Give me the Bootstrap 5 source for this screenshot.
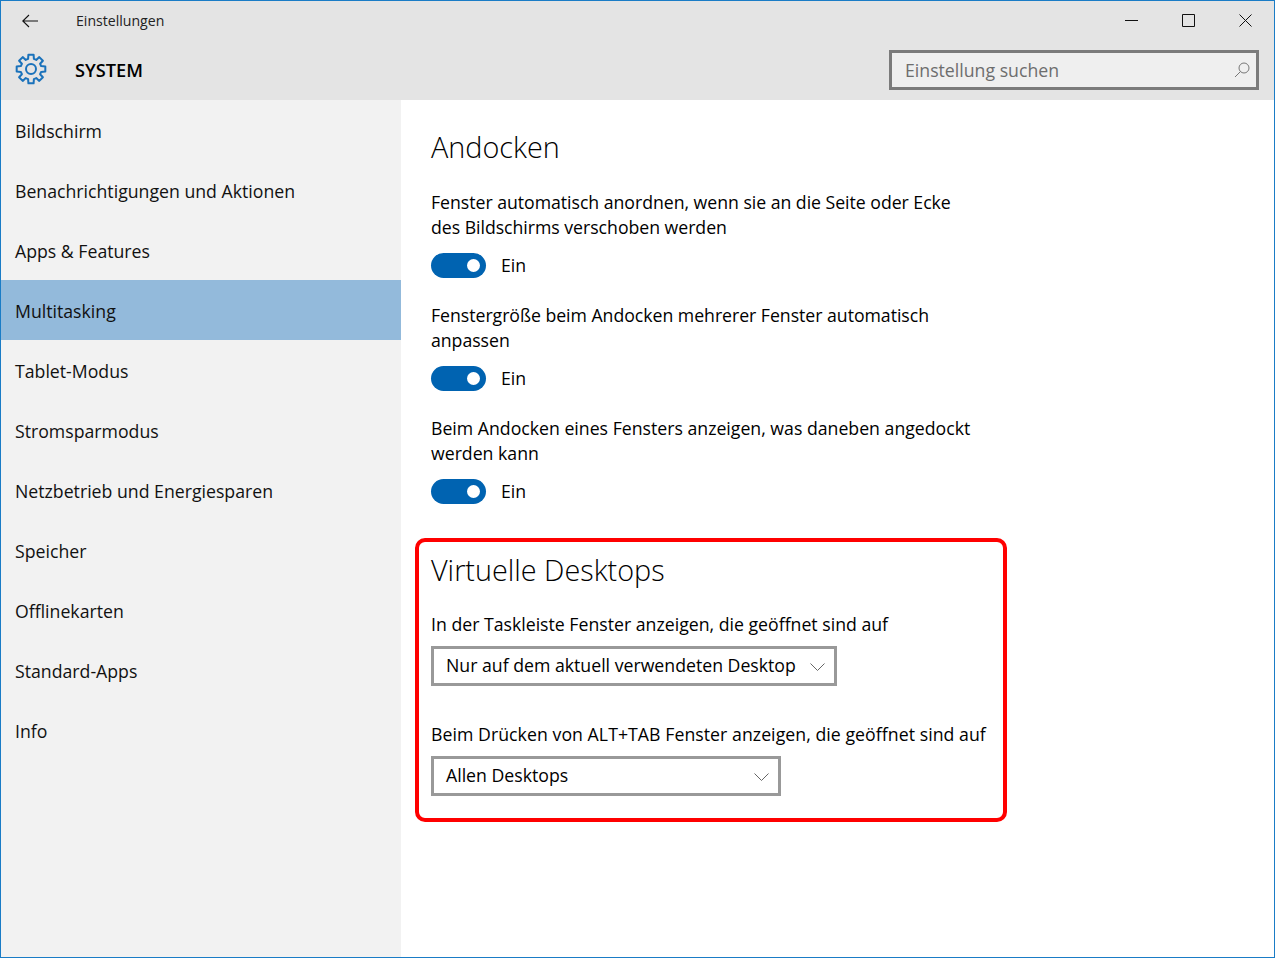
<!DOCTYPE html>
<html lang="de">
<head>
<meta charset="utf-8">
<title>Einstellungen</title>
<link href="https://cdn.jsdelivr.net/npm/bootstrap@5.3.0/dist/css/bootstrap.min.css" rel="stylesheet">
<style>
html,body{height:100%;}
body{margin:0;background:#fff;color:#000;font-family:"Open Sans","Noto Sans",sans-serif;font-size:17.7px;line-height:25px;overflow:hidden;}
.win-frame{height:958px;width:1275px;border:1px solid #1a7cc6;display:flex;flex-direction:column;}
.win-head{height:99px;background:#e4e4e4;flex:none;}
.title-row{height:39px;}
.back-slot{width:59px;padding-left:21px;}
.app-title{font-size:14.1px;margin-left:16px;color:#222;}
.ctl-slot{width:57px;height:39px;}
.sys-row{height:60px;padding-right:15px;}
.gear-slot{width:74px;padding:0 0 2px 14px;}
.sys-title{font-size:18.2px;font-weight:600;color:#000;}
.search-box{width:370px;height:40px;border:3px solid #7b7b7b;background:#efefef;padding:0 6px 0 13px;color:#6d6d6d;}
.side-nav{width:400px;background:#f2f2f2;flex:none;}
.side-item{height:60px;padding:1px 0 0 14px;line-height:60px;color:#111;}
.side-item.on{background:#93badb;}
.pane{padding:0 0 0 14px;}
.sect-title{font-size:28.8px;line-height:36px;font-weight:300;color:#000;margin:0;}
.lead-sect{padding:29px 0 0 16px;}
.setting-text{width:570px;margin:0;}
.mt-first{margin-top:25px;}
.mt-next{margin-top:19px;}
.sw-row{height:38px;margin-top:6px;}
.sw-track{width:55px;height:25px;border-radius:13px;background:#0063b1;position:relative;flex:none;}
.sw-knob{position:absolute;right:6px;top:6px;width:13px;height:13px;border-radius:50%;background:#fff;}
.sw-label{margin-left:15px;}
.red-box{width:592px;height:284px;border:4px solid #f00;border-radius:10px;margin-top:28px;padding:10px 0 0 12px;}
.combo{height:40px;border:3px solid #999;display:flex;align-items:center;justify-content:space-between;padding:0 9px 2px 12px;margin-top:9px;color:#000;}
.combo svg{margin-top:3px;}
.combo-a{width:406px;}
.combo-b{width:350px;}
.label-a{margin-top:24px;}
.label-b{margin-top:36px;letter-spacing:.05px;}
.tight-line{letter-spacing:-.03px;}
</style>
</head>
<body>
<div class="win-frame">
  <header class="win-head">
    <div class="title-row d-flex align-items-center">
      <div class="back-slot d-flex">
        <svg width="16" height="14" viewBox="0 0 16 14" fill="none" stroke="#111" stroke-width="1.1"><path d="M0.8 7H16M7 1 0.8 7l6.2 6"/></svg>
      </div>
      <span class="app-title">Einstellungen</span>
      <div class="ms-auto d-flex">
        <div class="ctl-slot d-flex align-items-center justify-content-center"><svg width="13" height="13" viewBox="0 0 13 13" fill="none" stroke="#111"><path d="M0 6.5H13"/></svg></div>
        <div class="ctl-slot d-flex align-items-center justify-content-center"><svg width="13" height="13" viewBox="0 0 13 13" fill="none" stroke="#111"><path d="M.5.5h12v12H.5z"/></svg></div>
        <div class="ctl-slot d-flex align-items-center justify-content-center"><svg width="13" height="13" viewBox="0 0 13 13" fill="none" stroke="#111"><path d="M.5.5l12 12M12.5.5l-12 12"/></svg></div>
      </div>
    </div>
    <div class="sys-row d-flex align-items-center">
      <div class="gear-slot d-flex">
        <svg width="32" height="32" viewBox="-16 -16 32 32" fill="none" stroke="#1a72bb" stroke-width="2" stroke-linejoin="round"><circle r="5"/><path d="M-2.9-10.14-2.6-14.32 2.6-14.32 2.9-10.14 5.25-9.09 8.3-11.9 11.9-8.3 9.09-5.25 10.14-2.9 14.32-2.6 14.32 2.6 10.14 2.9 9.09 5.25 11.9 8.3 8.3 11.9 5.25 9.09 2.9 10.14 2.6 14.32-2.6 14.32-2.9 10.14-5.25 9.09-8.3 11.9-11.9 8.3-9.09 5.25-10.14 2.9-14.32 2.6-14.32-2.6-10.14-2.9-9.09-5.25-11.9-8.3-8.3-11.9-5.25-9.09Z"/></svg>
      </div>
      <span class="sys-title">SYSTEM</span>
      <div class="search-box ms-auto d-flex align-items-center justify-content-between">
        <span>Einstellung suchen</span>
        <svg width="16" height="16" viewBox="0 0 16 16" fill="none" stroke="#777"><circle cx="10" cy="6" r="5"/><path d="M6.5 9.5 1 15"/></svg>
      </div>
    </div>
  </header>
  <div class="d-flex flex-grow-1">
    <nav class="side-nav">
      <div class="side-item">Bildschirm</div>
      <div class="side-item">Benachrichtigungen und Aktionen</div>
      <div class="side-item">Apps &amp; Features</div>
      <div class="side-item on">Multitasking</div>
      <div class="side-item">Tablet-Modus</div>
      <div class="side-item">Stromsparmodus</div>
      <div class="side-item">Netzbetrieb und Energiesparen</div>
      <div class="side-item">Speicher</div>
      <div class="side-item">Offlinekarten</div>
      <div class="side-item">Standard-Apps</div>
      <div class="side-item">Info</div>
    </nav>
    <main class="pane flex-grow-1">
      <section class="lead-sect">
        <h2 class="sect-title">Andocken</h2>
        <p class="setting-text mt-first tight-line">Fenster automatisch anordnen, wenn sie an die Seite oder Ecke<br>des Bildschirms verschoben werden</p>
        <div class="sw-row d-flex align-items-center"><div class="sw-track"><span class="sw-knob"></span></div><span class="sw-label">Ein</span></div>
        <p class="setting-text mt-next tight-line">Fenstergröße beim Andocken mehrerer Fenster automatisch<br>anpassen</p>
        <div class="sw-row d-flex align-items-center"><div class="sw-track"><span class="sw-knob"></span></div><span class="sw-label">Ein</span></div>
        <p class="setting-text mt-next">Beim Andocken eines Fensters anzeigen, was daneben angedockt<br>werden kann</p>
        <div class="sw-row d-flex align-items-center"><div class="sw-track"><span class="sw-knob"></span></div><span class="sw-label">Ein</span></div>
      </section>
      <section class="red-box">
        <h2 class="sect-title">Virtuelle Desktops</h2>
        <p class="label-a mb-0">In der Taskleiste Fenster anzeigen, die geöffnet sind auf</p>
        <div class="combo combo-a"><span>Nur auf dem aktuell verwendeten Desktop</span><svg width="15" height="8" viewBox="0 0 15 8" fill="none" stroke="#666"><path d="M.5.5l7 7 7-7"/></svg></div>
        <p class="label-b mb-0">Beim Drücken von ALT+TAB Fenster anzeigen, die geöffnet sind auf</p>
        <div class="combo combo-b"><span>Allen Desktops</span><svg width="15" height="8" viewBox="0 0 15 8" fill="none" stroke="#666"><path d="M.5.5l7 7 7-7"/></svg></div>
      </section>
    </main>
  </div>
</div>
</body>
</html>
